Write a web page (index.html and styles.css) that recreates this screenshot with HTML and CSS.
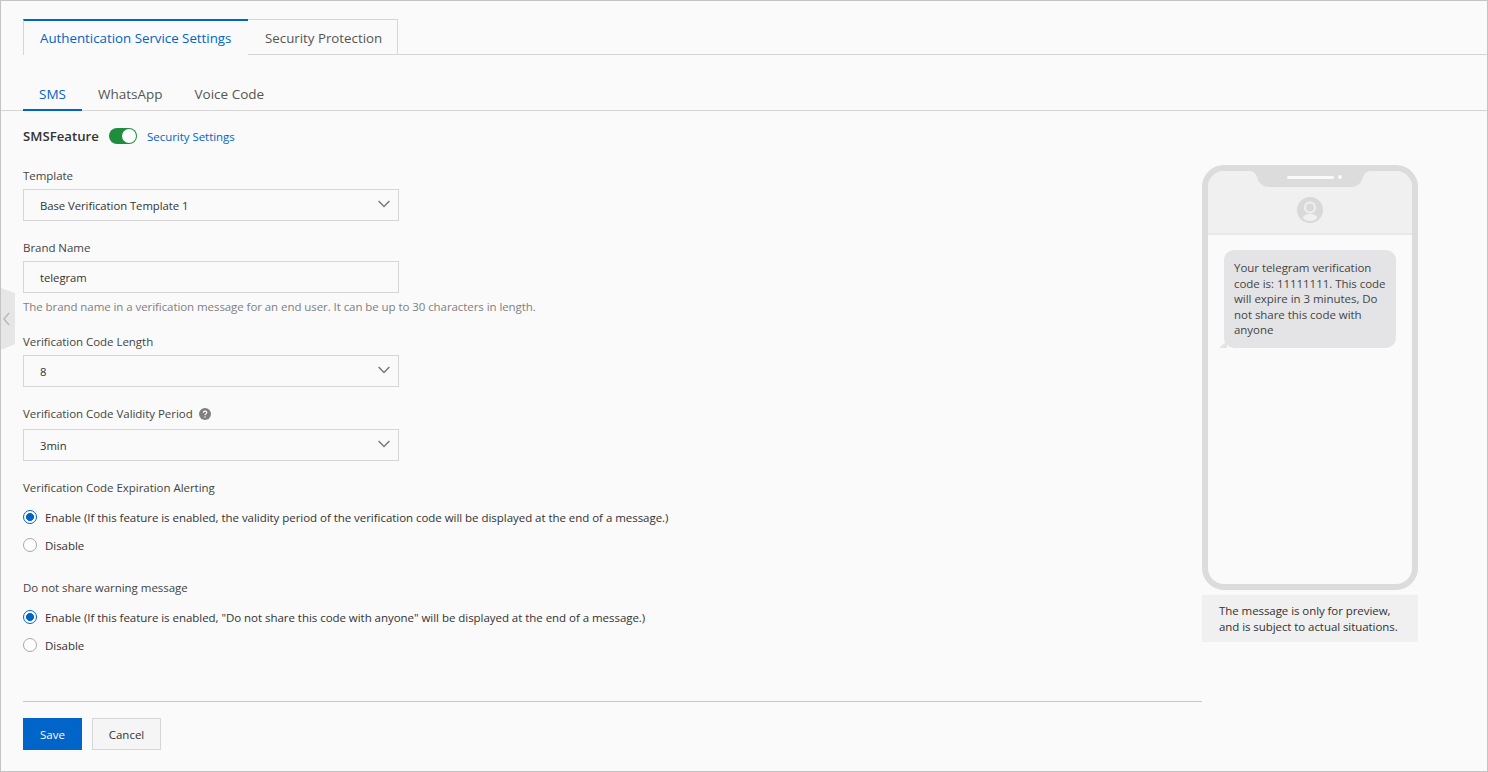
FILE: index.html
```html
<!DOCTYPE html>
<html lang="en">
<head>
<meta charset="utf-8">
<title>Authentication Service Settings</title>
<link rel="stylesheet" href="styles.css">
</head>
<body>
<div class="page">
  <button class="collapse" aria-label="Collapse">
    <svg width="8" height="14" viewBox="0 0 8 14"><path d="M7 1L2 7l5 6" fill="none" stroke="#b8b8b8" stroke-width="1.4"/></svg>
  </button>
  <div class="main-tabs">
    <div class="main-tab active">Authentication Service Settings</div>
    <div class="main-tab">Security Protection</div>
  </div>
  <div class="sub-tabs">
    <div class="sub-tab active">SMS</div>
    <div class="sub-tab">WhatsApp</div>
    <div class="sub-tab">Voice Code</div>
  </div>
  <div class="content">
    <div class="form">
      <div class="feature">
        <span class="feature-name">SMSFeature</span>
        <span class="switch"><span class="knob"></span></span>
        <a class="link">Security Settings</a>
      </div>
      <div class="label first">Template</div>
      <div class="field"><span>Base Verification Template 1</span><svg class="chev" width="12" height="8" viewBox="0 0 12 8"><path d="M.6 1l5.4 5.4L11.4 1" fill="none" stroke="#757575" stroke-width="1.4"/></svg></div>
      <div class="label">Brand Name</div>
      <div class="field"><span>telegram</span></div>
      <div class="help">The brand name in a verification message for an end user. It can be up to 30 characters in length.</div>
      <div class="label after-help">Verification Code Length</div>
      <div class="field"><span>8</span><svg class="chev" width="12" height="8" viewBox="0 0 12 8"><path d="M.6 1l5.4 5.4L11.4 1" fill="none" stroke="#757575" stroke-width="1.4"/></svg></div>
      <div class="label with-tip">Verification Code Validity Period
        <svg class="q" width="12" height="12" viewBox="0 0 12 12"><circle cx="6" cy="6" r="6" fill="#808080"/><path d="M4.3 4.7c0-1 .8-1.6 1.8-1.6s1.7.6 1.7 1.5c0 1.3-1.8 1.3-1.8 2.6" fill="none" stroke="#fff" stroke-width="1.1"/><circle cx="6" cy="9" r=".7" fill="#fff"/></svg>
      </div>
      <div class="field"><span>3min</span><svg class="chev" width="12" height="8" viewBox="0 0 12 8"><path d="M.6 1l5.4 5.4L11.4 1" fill="none" stroke="#757575" stroke-width="1.4"/></svg></div>
      <div class="label">Verification Code Expiration Alerting</div>
      <div class="radios">
        <div class="radio-row"><span class="radio on"></span>Enable (If this feature is enabled, the validity period of the verification code will be displayed at the end of a message.)</div>
        <div class="radio-row"><span class="radio"></span>Disable</div>
      </div>
      <div class="label group">Do not share warning message</div>
      <div class="radios">
        <div class="radio-row"><span class="radio on"></span>Enable (If this feature is enabled, "Do not share this code with anyone" will be displayed at the end of a message.)</div>
        <div class="radio-row"><span class="radio"></span>Disable</div>
      </div>
      <div class="actions">
        <button class="btn primary">Save</button>
        <button class="btn">Cancel</button>
      </div>
    </div>
    <div class="preview">
      <div class="phone">
        <div class="notch"><span class="speaker"></span><span class="camera"></span></div>
        <div class="phone-head">
          <svg width="26" height="26" viewBox="0 0 26 26"><circle cx="13" cy="13" r="13" fill="#d9d9d9"/><circle cx="13" cy="10.5" r="5" fill="none" stroke="#f0f0f0" stroke-width="2"/><ellipse cx="13" cy="20.5" rx="7" ry="3.4" fill="#f0f0f0"/></svg>
        </div>
        <div class="bubble">Your telegram verification code is: 11111111. This code will expire in 3 minutes, Do not share this code with anyone</div>
      </div>
      <div class="note">The message is only for preview,<br>and is subject to actual situations.</div>
    </div>
  </div>
</div>
</body>
</html>
```
FILE: styles.css
```css
* { box-sizing: border-box; }
html, body { margin: 0; height: 100%; }
body { font-family: "Open Sans", "Noto Sans", "Liberation Sans", sans-serif; font-size: 11.5px; letter-spacing: -0.04px; color: #333; background: #fafafa; }
.page { position: relative; width: 1488px; height: 772px; border: 1px solid #c4c4c4; background: #fafafa; padding: 18px 0 0 22px; overflow: hidden; }
.collapse { position: absolute; left: 0; top: 287px; width: 14px; height: 62px; padding: 0 0 0 1px; border: 0; background: #e6e6e6; clip-path: polygon(0 0, 100% 5px, 100% calc(100% - 6px), 0 100%); display: flex; align-items: center; }
.main-tabs { display: flex; height: 36px; border-bottom: 1px solid #d6d6d6; }
.main-tab { width: 150px; height: 36px; padding: 8px 0 0 17px; font-size: 13.3px; letter-spacing: 0; line-height: 20px; color: #555; border: 1px solid #d6d6d6; border-left: 0; white-space: nowrap; }
.main-tab.active { width: 225px; padding-left: 16px; color: #0064c8; border: 0; border-left: 1px solid #d6d6d6; border-top: 2px solid #0064c8; padding-top: 7px; background: #fafafa; }
.sub-tabs { display: flex; height: 56px; margin-left: -22px; padding: 20px 0 0 22px; border-bottom: 1px solid #d6d6d6; }
.sub-tab { height: 36px; padding: 9px 16px 0; font-size: 13.5px; letter-spacing: 0; line-height: 20px; color: #555; }
.sub-tab.active { color: #0064c8; border-bottom: 2px solid #0064c8; height: 36px; }
.content { display: flex; }
.form { width: 1179px; }
.feature { display: flex; align-items: center; height: 20px; margin-top: 15px; }
.feature-name { width: 76px; font-size: 13.2px; letter-spacing: 0; font-weight: 600; color: #333; white-space: nowrap; }
.switch { position: relative; width: 28px; height: 16px; margin: 0 10px; border-radius: 8px; background: #1e8e3e; }
.knob { position: absolute; right: 1px; top: 1px; width: 14px; height: 14px; border-radius: 50%; background: #fff; }
.link { color: #0064c8; }
.label { margin-top: 18px; height: 18px; line-height: 18px; color: #444; display: flex; align-items: center; gap: 6px; }
.label.first { margin-top: 21px; }
.label.after-help { margin-top: 17px; }
.label.with-tip { margin-bottom: 6px; }
.label.group { margin-top: 20px; }
.q { flex: none; }
.field { display: flex; align-items: center; justify-content: space-between; width: 376px; height: 32px; margin-top: 4px; padding: 0 8px 0 16px; border: 1px solid #d6d6d6; background: #fafafa; color: #333; font-size: 11.3px; }
.chev { margin-top: -3px; }
.help { margin-top: 5px; height: 18px; line-height: 18px; color: #808080; letter-spacing: -0.07px; white-space: nowrap; }
.radios { margin-top: 6px; }
.radio-row { display: flex; align-items: center; height: 28px; color: #333; white-space: nowrap; }
.radio { width: 14px; height: 14px; margin-right: 8px; border: 1px solid #a8a8a8; border-radius: 50%; background: #fff; }
.radio.on { border: 1px solid #0064c8; background: radial-gradient(circle, #0064c8 0 3.7px, #fff 4.2px); }
.actions { display: flex; gap: 10px; margin-top: 42px; padding-top: 16px; border-top: 1px solid #c8c8c8; }
.btn { width: 69px; height: 32px; border: 1px solid #d6d6d6; background: #f5f5f5; color: #333; font: inherit; }
.btn.primary { width: 59px; background: #0064c8; border-color: #0064c8; color: #fff; }
.preview { width: 216px; margin-top: 54px; }
.phone { position: relative; width: 216px; height: 425px; border: 6px solid #dcdcdc; border-radius: 22px; background: #fafafa; }
.notch { position: absolute; z-index: 1; left: 49px; top: 0; width: 106px; height: 16px; padding: 0 0 4px 8px; border-radius: 0 0 12px 12px; background: #dcdcdc; display: flex; align-items: center; justify-content: center; gap: 4px; }
.notch::before, .notch::after { content: ""; position: absolute; top: 0; width: 7px; height: 7px; }
.notch::before { left: -7px; background: radial-gradient(circle at 0 100%, #f0f0f0 6.5px, #dcdcdc 7px); }
.notch::after { right: -7px; background: radial-gradient(circle at 100% 100%, #f0f0f0 6.5px, #dcdcdc 7px); }
.speaker { width: 47px; height: 3px; border-radius: 2px; background: #fafafa; }
.camera { width: 4px; height: 4px; border-radius: 50%; background: #fafafa; }
.phone-head { display: flex; justify-content: center; padding-top: 26px; height: 64px; border-radius: 16px 16px 0 0; border-bottom: 2px solid #e8e8e8; background: #f0f0f0; }
.bubble { position: relative; width: 172px; margin: 15px 0 0 16px; padding: 10px 10px 10px; border-radius: 10px; background: #e4e4e6; line-height: 15.6px; color: #444; }
.bubble::before { content: ""; position: absolute; left: -5px; bottom: 0; border-left: 8px solid transparent; border-bottom: 7px solid #e4e4e6; }
.note { margin-top: 5px; height: 47px; padding: 8px 0 0 17px; background: #f0f0f0; line-height: 16px; letter-spacing: -0.07px; color: #333; }
```
